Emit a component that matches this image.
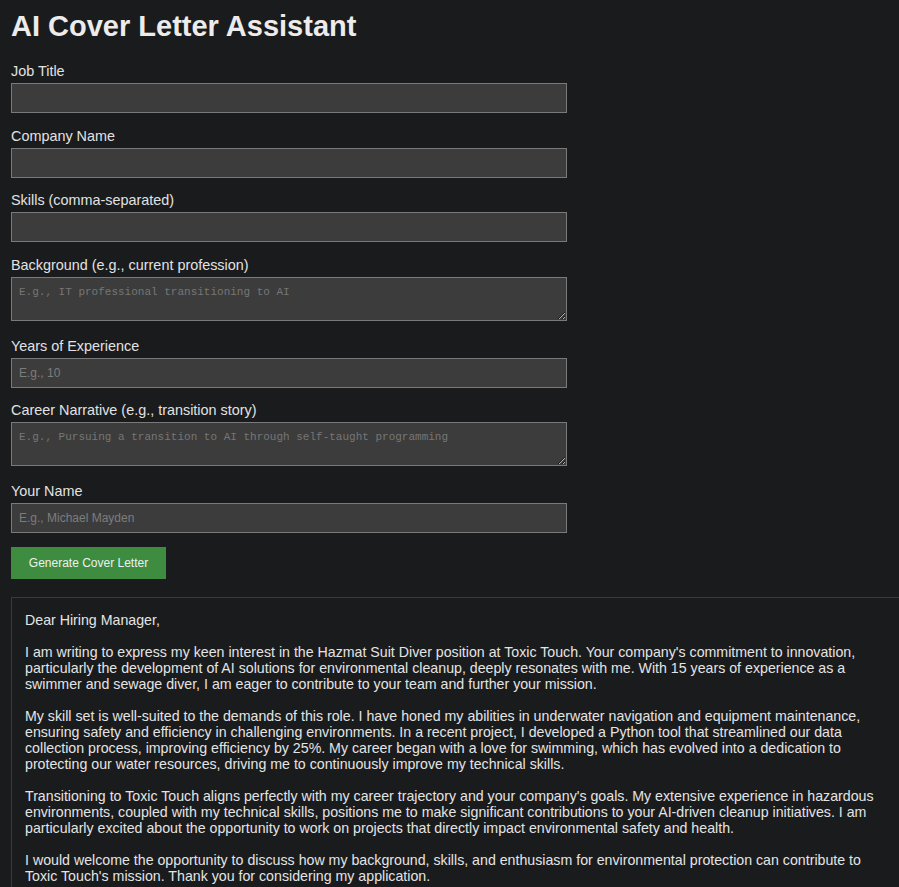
const fields = [
  { label: "Job Title", kind: "input" },
  { label: "Company Name", kind: "input" },
  { label: "Skills (comma-separated)", kind: "input" },
  {
    label: "Background (e.g., current profession)",
    kind: "textarea",
    placeholder: "E.g., IT professional transitioning to AI",
  },
  { label: "Years of Experience", kind: "input", placeholder: "E.g., 10" },
  {
    label: "Career Narrative (e.g., transition story)",
    kind: "textarea",
    placeholder: "E.g., Pursuing a transition to AI through self-taught programming",
  },
  { label: "Your Name", kind: "input", placeholder: "E.g., Michael Mayden", last: true },
];

const letter = `Dear Hiring Manager,

I am writing to express my keen interest in the Hazmat Suit Diver position at Toxic Touch. Your company's commitment to innovation, particularly the development of AI solutions for environmental cleanup, deeply resonates with me. With 15 years of experience as a swimmer and sewage diver, I am eager to contribute to your team and further your mission.

My skill set is well-suited to the demands of this role. I have honed my abilities in underwater navigation and equipment maintenance, ensuring safety and efficiency in challenging environments. In a recent project, I developed a Python tool that streamlined our data collection process, improving efficiency by 25%. My career began with a love for swimming, which has evolved into a dedication to protecting our water resources, driving me to continuously improve my technical skills.

Transitioning to Toxic Touch aligns perfectly with my career trajectory and your company's goals. My extensive experience in hazardous environments, coupled with my technical skills, positions me to make significant contributions to your AI-driven cleanup initiatives. I am particularly excited about the opportunity to work on projects that directly impact environmental safety and health.

I would welcome the opportunity to discuss how my background, skills, and enthusiasm for environmental protection can contribute to Toxic Touch's mission. Thank you for considering my application.

Sincerely,
Michael Mayden`;

function Field({ field }) {
  const gap = field.last ? "mb-[14px]" : field.kind === "textarea" ? "mb-[17px]" : "mb-[14.5px]";
  return (
    <div className={gap}>
      <label className="block text-[14.4px] leading-[16px] text-[#e2e2e2] mb-[4px]">{field.label}</label>
      {field.kind === "input" ? (
        <input
          type="text"
          placeholder={field.placeholder}
          className="block w-[556px] h-[30px] px-[7px] bg-[#3c3c3c] border border-[#7a7a7a] text-[12px] text-[#e2e2e2] placeholder:text-[#7c7c7c] outline-none"
        />
      ) : (
        <textarea
          placeholder={field.placeholder}
          className="block w-[556px] h-[44px] px-[7px] py-[8px] bg-[#3c3c3c] border border-[#7a7a7a] text-[11px] leading-[12.5px] text-[#e2e2e2] placeholder:text-[#767676] outline-none font-['Liberation_Mono',monospace]"
        />
      )}
    </div>
  );
}

export default function App() {
  return (
    <div className="h-screen overflow-hidden bg-[#1a1b1d] pl-[11px] pt-[10px] font-['Liberation_Sans',Arial,sans-serif]">
      <h1 className="text-[29px] leading-[33px] font-bold text-[#ececec] mb-[20px]">AI Cover Letter Assistant</h1>

      {fields.map((f) => (
        <Field key={f.label} field={f} />
      ))}

      <button className="block w-[155px] h-[32px] bg-[#3d8c40] text-[12px] text-[#f0f0f0] mb-[18px]">
        Generate Cover Letter
      </button>

      <div className="w-[900px] border border-[#3a3a3a] pt-[14px] pb-[15px] pl-[13px] pr-[15px] text-[14.2px] leading-[16px] text-[#e4e4e4] whitespace-pre-wrap">
        {letter}
      </div>
    </div>
  );
}
